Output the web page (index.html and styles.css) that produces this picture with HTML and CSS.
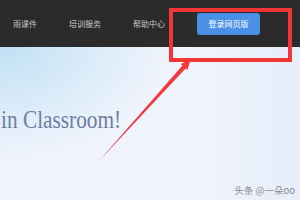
FILE: index.html
```html
<!DOCTYPE html>
<html lang="zh-CN">
<head>
<meta charset="utf-8">
<title>雨课堂</title>
<link rel="stylesheet" href="styles.css">
</head>
<body>
<div class="page">
  <header class="topbar">
    <nav class="nav">
      <span class="nav-item">雨课件</span>
      <span class="nav-item">培训服务</span>
      <span class="nav-item">帮助中心</span>
      <span class="login-btn">登录网页版</span>
    </nav>
  </header>
  <main class="hero">
    <h1 class="title">in Classroom!</h1>
    <div class="mark">头条 @一朵oo</div>
  </main>
  <div class="callout"></div>
  <svg class="arrow" width="300" height="200" viewBox="0 0 300 200">
    <defs>
      <linearGradient id="ag" x1="98" y1="162" x2="190" y2="60" gradientUnits="userSpaceOnUse">
        <stop offset="0" stop-color="#e45a6a"/>
        <stop offset="0.3" stop-color="#ef3a3f"/>
        <stop offset="1" stop-color="#f23a3a"/>
      </linearGradient>
    </defs>
    <polygon fill="url(#ag)" points="98,162 185.6,68.5 187.3,70 190.7,59.6 180.7,64 182.4,65.5"/>
  </svg>
</div>
</body>
</html>
```
FILE: styles.css
```css
html, body {
  margin: 0;
  padding: 0;
}
body {
  width: 300px;
  height: 200px;
  overflow: hidden;
  font-family: "Noto Sans CJK SC", "Noto Sans", sans-serif;
}
.page {
  position: relative;
  width: 300px;
  height: 200px;
  overflow: hidden;
  display: flex;
  flex-direction: column;
}
.topbar {
  height: 47px;
  flex: none;
  background: #2b2b2b;
  display: flex;
  align-items: center;
  padding-left: 13px;
}
.nav {
  display: flex;
  align-items: center;
  gap: 32px;
}
.nav-item {
  color: #c8c8c8;
  font-size: 8px;
  line-height: 10px;
  white-space: nowrap;
}
.login-btn {
  width: 63px;
  height: 22px;
  background: #4a90e6;
  border-radius: 3px;
  color: #ffffff;
  font-size: 8px;
  display: flex;
  align-items: center;
  justify-content: center;
  white-space: nowrap;
}
.hero {
  flex: 1;
  display: flex;
  flex-direction: column;
  background:
    radial-gradient(ellipse 170px 110px at 0 0, #bfe0f4 0%, #d6eaf8 45%, rgba(236,243,252,0) 100%),
    linear-gradient(90deg, #eef3fc 0%, #f0f4fc 60%, #e6eefa 100%);
}
.title {
  margin: 60px 0 0 1px;
  font-family: "Liberation Serif", "Times New Roman", serif;
  font-weight: normal;
  font-size: 26px;
  line-height: 26px;
  color: #6e7da3;
  white-space: nowrap;
  transform: scaleX(0.82);
  transform-origin: 0 0;
}
.mark {
  margin-top: auto;
  align-self: flex-end;
  padding: 0 5px 5px 0;
  font-size: 9.5px;
  line-height: 10px;
  color: #8a8a8a;
  white-space: nowrap;
}
.callout {
  position: absolute;
  left: 169px;
  top: 8px;
  width: 115px;
  height: 46px;
  border: 4px solid #f23535;
}
.arrow {
  position: absolute;
  left: 0;
  top: 0;
}
```
